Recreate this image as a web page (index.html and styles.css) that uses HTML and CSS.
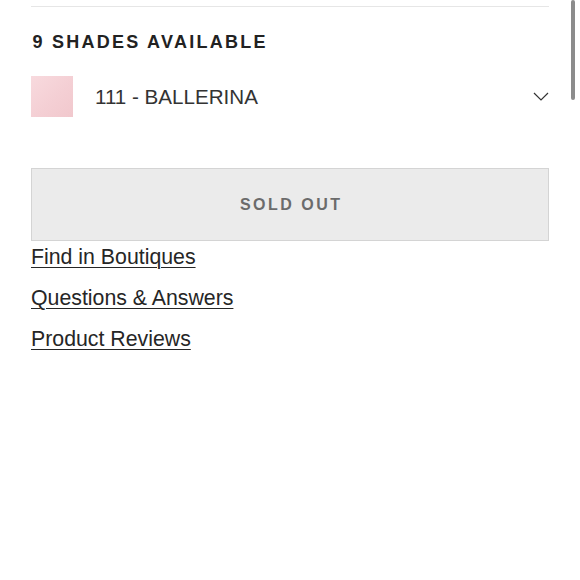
FILE: index.html
```html
<!DOCTYPE html>
<html>
<head>
<meta charset="utf-8">
<link rel="stylesheet" href="styles.css">
</head>
<body>
<div class="page">
  <div class="divider"></div>
  <h2 class="shades-title">9 SHADES AVAILABLE</h2>
  <div class="shade-select">
    <span class="swatch"></span>
    <span class="shade-name">111 - BALLERINA</span>
    <svg class="chevron" width="16" height="9" viewBox="0 0 16 9"><polyline points="1,1 8,8 15,1" fill="none" stroke="#333" stroke-width="1.2"/></svg>
  </div>
  <button class="sold-out">SOLD OUT</button>
  <nav class="links">
    <a href="#" class="link">Find in Boutiques</a>
    <a href="#" class="link">Questions &amp; Answers</a>
    <a href="#" class="link">Product Reviews</a>
  </nav>
</div>
<div class="scrollbar"></div>
</body>
</html>
```
FILE: styles.css
```css
html, body {
  margin: 0;
  padding: 0;
  background: #ffffff;
}
body {
  font-family: "Liberation Sans", Arial, sans-serif;
  color: #222;
  width: 580px;
  height: 580px;
  overflow: hidden;
  position: relative;
}
.page {
  padding: 0 31px;
}
.divider {
  margin-top: 6px;
  border-top: 1px solid #e6e6e6;
}
.shades-title {
  margin: 26px 0 0 0;
  font-size: 18px;
  line-height: 18px;
  font-weight: 700;
  letter-spacing: 2.25px;
  color: #222;
  padding-left: 1.5px;
}
.shade-select {
  display: flex;
  align-items: center;
  margin-top: 24px;
  height: 42px;
}
.swatch {
  width: 42px;
  height: 41px;
  flex: none;
  background: linear-gradient(135deg, #f8dade 0%, #f4cfd4 55%, #f1c8cd 100%);
}
.shade-name {
  margin-left: 22px;
  font-size: 20.6px;
  color: #333;
  flex: 1;
  line-height: 24px;
  padding-top: 1px;
}
.chevron {
  flex: none;
}
.sold-out {
  display: block;
  width: 100%;
  height: 73px;
  margin: 51px 0 0 0;
  background: #ebebeb;
  border: 1px solid #d4d4d4;
  font-family: "Liberation Sans", Arial, sans-serif;
  font-weight: 700;
  font-size: 16px;
  letter-spacing: 2.5px;
  padding: 0 0 0 2.5px;
  color: #6b6b6b;
}
.links {
  display: flex;
  flex-direction: column;
  align-items: flex-start;
  gap: 17px;
  margin-top: 4px;
}
.link {
  font-size: 21.3px;
  line-height: 24px;
  color: #262626;
  text-decoration: underline;
  text-decoration-thickness: 1px;
  text-underline-offset: 3px;
}
.scrollbar {
  position: absolute;
  top: 0;
  left: 571px;
  width: 4px;
  height: 100px;
  background: #8c8c8c;
  border-radius: 2px;
}
```
